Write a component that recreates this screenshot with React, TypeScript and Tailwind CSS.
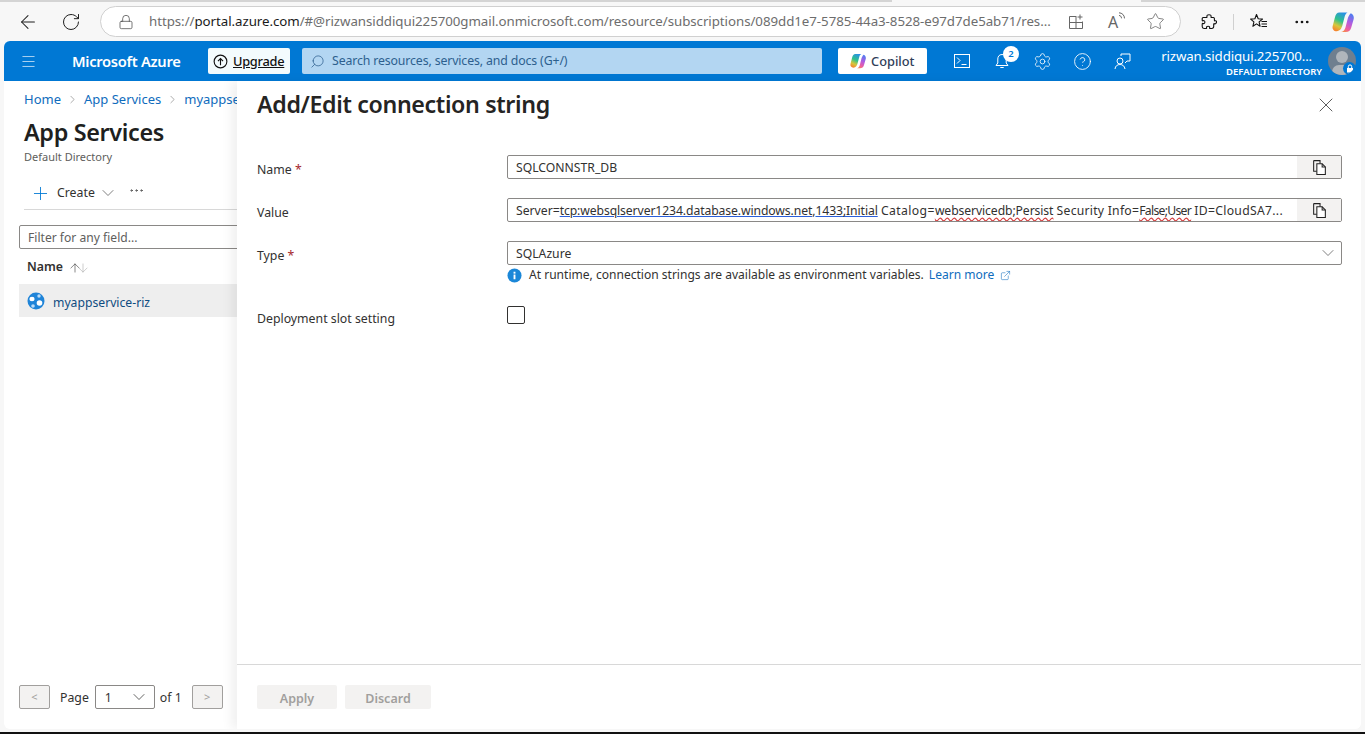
import React from "react";
import {
  ArrowLeft, RotateCw, Lock, Star, MoreHorizontal, Menu, Search, Settings, CircleHelp, Plus,
  ChevronDown, ChevronRight, X, ExternalLink, ArrowUp, ArrowDown,
} from "lucide-react";

const font = { fontFamily: '"Noto Sans", "Open Sans", sans-serif' };

function CopyGlyph() {
  return (
    <svg width="17" height="17" viewBox="0 0 16 16" fill="none" stroke="#222" strokeWidth="1">
      <path d="M2.500 1.500h6v3M2.500 1.500v10h3" />
      <path d="M5.500 4.500h5l3 3v7h-8z" fill="#fff" />
      <path d="M10.500 4.500v3h3" />
    </svg>
  );
}

function CopilotLogo({ size = 16 }: { size?: number }) {
  return (
    <svg width={size} height={size} viewBox="0 0 24 24">
      <defs>
        <linearGradient id={`cpa${size}`} x1="0.700" y1="0" x2="0.300" y2="1">
          <stop offset="0" stopColor="#2a8fe8" />
          <stop offset="0.450" stopColor="#2fc28a" />
          <stop offset="0.750" stopColor="#d8c63a" />
          <stop offset="1" stopColor="#f5852f" />
        </linearGradient>
        <linearGradient id={`cpb${size}`} x1="0.700" y1="0" x2="0.300" y2="1">
          <stop offset="0" stopColor="#4f7df0" />
          <stop offset="0.450" stopColor="#b35be0" />
          <stop offset="0.800" stopColor="#ee5fa0" />
          <stop offset="1" stopColor="#f58a50" />
        </linearGradient>
      </defs>
      <path d="M8 1.500h9c-1.500.8-2.500 2-3 4L11.500 15c-.8 3.500-2.500 7-6.500 7-3 0-5-2.500-4.300-5.500L3.300 6.500C4 3.500 5.500 1.500 8 1.500z" fill={`url(#cpa${size})`} />
      <path d="M10 23c2.500-.5 4-2.500 4.700-5L17 9c.6-2.500 1.700-5 3.500-6.500C23 3.500 24.300 6 23.600 9L21 18c-.8 3.200-3 5-6 5z" fill={`url(#cpb${size})`} />
    </svg>
  );
}

function AppServiceIcon() {
  return (
    <svg width="18" height="18" viewBox="0 0 18 18">
      <circle cx="9" cy="9" r="8.500" fill="#1f84d8" />
      <ellipse cx="5" cy="7" rx="2.600" ry="2.200" fill="#fff" />
      <circle cx="12" cy="4" r="1.700" fill="#bcdcf7" />
      <circle cx="6" cy="14" r="1.800" fill="#bcdcf7" />
      <circle cx="12.500" cy="11" r="2.800" fill="#fff" />
    </svg>
  );
}

function HeaderIcon({ children }: { children: React.ReactNode }) {
  return <div className="flex h-10 w-10 items-center justify-center text-white">{children}</div>;
}

function FormRow({ label, required, children, className, labelClass }: { label: string; required?: boolean; children: React.ReactNode; className?: string; labelClass?: string }) {
  return (
    <div className={`flex ${className ?? ""}`}>
      <div className={`w-[250px] shrink-0 text-[12.300px] leading-[18px] text-[#323130] ${labelClass ?? "pt-[6px]"}`}>
        {label}
        {required && <span className="text-[#a4262c]"> *</span>}
      </div>
      <div className="min-w-0 flex-1">{children}</div>
    </div>
  );
}

function CopyInput({ children }: { children: React.ReactNode }) {
  return (
    <div className="flex h-[24px] items-center rounded-[2px] border border-[#8a8886] bg-white">
      <div className="min-w-0 flex-1 overflow-hidden whitespace-nowrap pl-[8px] pr-[8px] pt-[3px] text-[12.200px] text-[#323130]">{children}</div>
      <div className="flex h-full w-[44px] shrink-0 items-center justify-center bg-[#f3f2f1]">
        <CopyGlyph />
      </div>
    </div>
  );
}

export default function App() {
  return (
    <div className="flex h-[734px] w-[1365px] flex-col overflow-hidden bg-[#f7f7f7]" style={font}>
      {/* Tab strip remnant */}
      <div className="flex h-[2px] shrink-0">
        <div className="w-[892px] bg-[#d4d4d4]" />
        <div className="w-[249px]" />
        <div className="flex-1 bg-[#d4d4d4]" />
      </div>
      {/* Browser toolbar */}
      <div className="flex h-[39px] shrink-0 items-center pl-[17px]">
        <ArrowLeft size={22} strokeWidth={1.100} className="text-[#1f1f1f]" />
        <RotateCw size={20} strokeWidth={1.200} className="ml-[22px] text-[#1f1f1f]" />
        <div className="ml-[19px] flex h-[31px] w-[1081px] items-center rounded-full border border-[#d0d0d0] bg-white pl-[17px]">
          <Lock size={16} strokeWidth={1.100} className="shrink-0 text-[#444]" />
          <div className="ml-[15px] w-[908px] shrink-0 whitespace-nowrap text-[13.300px] tracking-[-0.050px] text-[#6d6d6d]">
            https://<span className="text-[#1a1a1a]">portal.azure.com</span>/#@rizwansiddiqui225700gmail.onmicrosoft.com/resource/subscriptions/089dd1e7-5785-44a3-8528-e97d7de5ab71/res...
          </div>
          <div className="ml-[11px] flex items-center text-[#666]">
            <svg width="16" height="16" viewBox="0 0 16 16" fill="none" stroke="#666" strokeWidth="1">
              <path d="M8.500 2.500h-7v12h13v-7M8 3v11M1.500 8.500h13M12 .5v5M9.500 3h5" />
            </svg>
            <div className="relative ml-[24px] flex h-[16px] w-[18px] items-center">
              <span className="text-[16px] leading-none text-[#666]">A</span>
              <svg className="absolute -top-[2px] left-[10px]" width="9" height="11" viewBox="0 0 9 11" fill="none" stroke="#666" strokeWidth="1">
                <path d="M1 3.500c1.400 0 2.500 1 2.500 2.800M1 .8c3 0 5.500 2.400 5.500 5.600" />
              </svg>
            </div>
            <Star size={19} strokeWidth={1} className="ml-[20px]" />
          </div>
        </div>
        <svg width="16" height="16" viewBox="0 0 16 16" fill="none" stroke="#111" strokeWidth="1.100" strokeLinejoin="round" className="ml-[20px]">
          <path d="M6 2.800C5.500 1.300 6.800.7 8 .7s2.500.6 2 2.100c-.1.500.2.700.6.700h1.800c.6 0 1 .4 1 1v1.700c0 .5.300.8.800.6 1.200-.4 1.600.9 1.100 2-.4 1-1.200 1.300-1.900.9-.4-.2-.7 0-.7.500v2.400c0 1-1 1.900-2 1.900H9.200c-.5 0-.8-.3-.6-.8.400-1-.4-1.500-1.500-1.500s-1.900.5-1.500 1.500c.2.500-.1.800-.6.800H3c-1 0-1.800-.9-1.800-1.900V10c0-.5.300-.7.800-.5 1 .5 1.900-.3 1.900-1.400S3 6.300 2 6.800c-.5.200-.8 0-.8-.5v-1.800c0-.6.400-1 1-1h3.200c.4 0 .7-.2.600-.7z" />
        </svg>
        <div className="ml-[16px] h-[16px] w-px bg-[#d0d0d0]" />
        <svg width="18" height="17" viewBox="0 0 18 17" fill="none" stroke="#111" strokeWidth="1.100" strokeLinejoin="round" className="ml-[16px]">
          <path d="M6.500 1.500 8.200 5.800l4.300.3-3.400 2.800 1 4.400-3.600-2.400-3.600 2.400 1-4.400L.6 6.100l4.300-.3z" />
          <path d="M11.500 8.500h5.500M11.500 11h5.500M11.500 13.500h5.500" />
        </svg>
        <MoreHorizontal size={18} strokeWidth={1.600} className="ml-[25px] text-[#111]" />
        <div className="ml-[21px]"><CopilotLogo size={22} /></div>
      </div>

      {/* Portal window */}
      <div className="mx-[4px] flex h-[688px] shrink-0 flex-col overflow-hidden rounded-[6px] bg-white">
        {/* Azure header */}
        <div className="flex h-[40px] shrink-0 items-center bg-[#0078d4] text-white">
          <Menu size={17} strokeWidth={1.300} className="ml-[16px] text-[#b8d9f3]" />
          <div className="ml-[35px] w-[136px] pt-px text-[14.700px] font-semibold tracking-[-0.020em]">Microsoft Azure</div>
          <div className="flex h-[26px] w-[82px] items-center rounded-[2px] bg-[#f3fbfd] pl-[5px] text-[#111]">
            <svg width="15" height="15" viewBox="0 0 16 16" fill="none" stroke="#111" strokeWidth="1.200">
              <circle cx="8" cy="8" r="6.800" />
              <path d="M8 12V5M5.300 7.500 8 4.800l2.700 2.700" />
            </svg>
            <span className="ml-[5px] pt-px text-[12.800px] font-medium tracking-[-0.020em] underline">Upgrade</span>
          </div>
          <div className="ml-[12px] flex h-[26px] w-[520px] items-center rounded-[2px] bg-[#b3d6f2] pl-[8px] text-[#2d5f8e]">
            <Search size={15} strokeWidth={1.200} className="-scale-x-100" />
            <span className="ml-[7px] pt-px text-[12.300px] tracking-[-0.010em]">Search resources, services, and docs (G+/)</span>
          </div>
          <div className="ml-[16px] flex h-[26px] w-[89px] items-center rounded-[2px] bg-white pl-[12px] text-[#2f3e58]">
            <CopilotLogo size={16} />
            <span className="ml-[5px] pt-px text-[12.800px] font-medium">Copilot</span>
          </div>
          <div className="ml-[15px] flex shrink-0 items-center">
            <HeaderIcon>
              <svg width="16" height="14" viewBox="0 0 16 14" fill="none" stroke="#fff" strokeWidth="1">
                <rect x=".5" y=".5" width="15" height="13" />
                <path d="m3 3.500 3 3-3 3M7.500 10.500h5" />
              </svg>
            </HeaderIcon>
            <div className="relative flex h-10 w-10 items-center justify-center">
              <svg width="14" height="16" viewBox="0 0 14 16" fill="none" stroke="#fff" strokeWidth="1">
                <path d="M7 1.500c-3 0-4.200 2.200-4.200 4.500v4L1 12.500h12L11.200 10V6C11.200 3.700 10 1.500 7 1.500ZM5.300 14.500h3.400" />
              </svg>
              <div className="absolute right-[3px] top-[5px] flex h-[16px] w-[16px] items-center justify-center rounded-full bg-white text-[9.500px] font-semibold text-[#0078d4]">2</div>
            </div>
            <HeaderIcon><Settings size={19} strokeWidth={1} /></HeaderIcon>
            <HeaderIcon><CircleHelp size={19} strokeWidth={1.100} /></HeaderIcon>
            <HeaderIcon>
              <svg width="17" height="17" viewBox="0 0 17 17" fill="none" stroke="#fff" strokeWidth="1">
                <circle cx="6" cy="8" r="3" />
                <path d="M1 16c.3-3 2.300-4.500 5-4.500s4.500 1.500 5 4.500M7 3V1h9v7h-3l-2 2" />
              </svg>
            </HeaderIcon>
          </div>
          <div className="ml-[7px] flex w-[173px] shrink-0 flex-col items-end pt-[5px] text-right">
            <div className="mr-[10px] whitespace-nowrap text-[13.300px] leading-[15px] tracking-[-0.010em]">rizwan.siddiqui.225700...</div>
            <div className="whitespace-nowrap text-[9.500px] font-semibold leading-[15px]">DEFAULT DIRECTORY</div>
          </div>
          <div className="relative ml-[6px] h-[28px] w-[28px] shrink-0 overflow-hidden rounded-full bg-[#6f7f8f]">
            <div className="absolute left-[8px] top-[4px] h-[12px] w-[12px] rounded-full bg-[#b0b6bc]" />
            <div className="absolute left-[4px] top-[18px] h-[14px] w-[20px] rounded-full bg-[#b0b6bc]" />
            <div className="absolute bottom-0 right-0 flex h-[13px] w-[13px] items-center justify-center rounded-full bg-[#0078d4]">
              <svg width="8" height="9" viewBox="0 0 8 9">
                <path d="M1 4h6v4.500H1z" fill="#fff" />
                <path d="M2.300 4V2.600a1.700 1.700 0 0 1 3.400 0V4" fill="none" stroke="#fff" strokeWidth="1" />
              </svg>
            </div>
          </div>
        </div>

        {/* Body */}
        <div className="flex min-h-0 flex-1">
          {/* Left list */}
          <div className="flex w-[233px] shrink-0 flex-col overflow-hidden pl-[15px]">
            <div className="mt-[9px] flex items-center whitespace-nowrap pl-[5px] text-[13px] leading-[18px] text-[#0f6cbd]">
              <span className="shrink-0">Home</span>
              <ChevronRight size={13} strokeWidth={1} className="mx-[5px] shrink-0 text-[#666]" />
              <span className="shrink-0">App Services</span>
              <ChevronRight size={13} strokeWidth={1} className="mx-[5px] shrink-0 text-[#666]" />
              <span>myappse</span>
            </div>
            <div className="mb-[3px] mt-[10px] pl-[5px] text-[23.400px] font-semibold leading-[28px] tracking-[-0.015em] text-[#201f1e]">App Services</div>
            <div className="pl-[5px] text-[11px] leading-[16px] text-[#605e5c]">Default Directory</div>
            <div className="ml-[5px] flex h-[45px] items-center border-b border-[#d8d8d8] pl-[6px] pt-[12px] text-[12.300px] text-[#323130]">
              <Plus size={21} strokeWidth={1} className="text-[#0078d4]" />
              <span className="ml-[6px]">Create</span>
              <ChevronDown size={20} strokeWidth={0.900} className="ml-[3px] text-[#555]" />
              <MoreHorizontal size={17} strokeWidth={1.200} className="ml-[10px] -translate-y-[3px] text-[#444]" />
            </div>
            <div className="mt-[15px] flex h-[24px] w-[240px] shrink-0 items-center rounded-[2px] border border-[#8a8886] pl-[8px] pt-[3px] text-[12.100px] text-[#605e5c]">
              Filter for any field...
            </div>
            <div className="flex h-[35px] shrink-0 items-center pl-[8px] pt-[2px] text-[12.300px] font-semibold text-[#323130]">
              Name
              <ArrowUp size={14} strokeWidth={1} className="ml-[5px] text-[#333]" />
              <ArrowDown size={14} strokeWidth={1} className="-ml-[6px] text-[#aaa]" />
            </div>
            <div className="flex h-[33px] w-[240px] shrink-0 items-center bg-[#eeeeee] pl-[8px] text-[12.200px] text-[#0f4c81]">
              <AppServiceIcon />
              <span className="ml-[8px] pt-[5px]">myappservice-riz</span>
            </div>
            <div className="flex-1" />
            <div className="mb-[20px] flex items-center text-[12.300px] text-[#323130]">
              <div className="flex h-[24px] w-[31px] items-center justify-center rounded-[2px] border border-[#a19f9d] bg-[#f3f2f1] text-[11px] text-[#a19f9d]">&lt;</div>
              <span className="ml-[10px] pt-[3px]">Page</span>
              <div className="ml-[6px] flex h-[24px] w-[60px] items-center justify-between rounded-[2px] border border-[#8a8886] bg-white pl-[9px] pr-[5px]">
                <span className="pt-[3px]">1</span>
                <ChevronDown size={20} strokeWidth={0.900} />
              </div>
              <span className="ml-[5px] pt-[3px]">of 1</span>
              <div className="ml-[10px] flex h-[24px] w-[31px] items-center justify-center rounded-[2px] border border-[#a19f9d] bg-[#f3f2f1] text-[11px] text-[#a19f9d]">&gt;</div>
            </div>
          </div>

          {/* Right blade */}
          <div className="z-10 flex min-w-0 flex-1 flex-col bg-white shadow-[-6px_0_10px_rgba(0,0,0,0.060)]">
            <div className="flex h-[51px] shrink-0 items-start justify-between pl-[20px] pr-[23px] pt-[6px]">
              <div className="text-[23.200px] font-semibold leading-[34px] tracking-[-0.015em] text-[#252423]">Add/Edit connection string</div>
              <X size={24} strokeWidth={0.800} className="mt-[6px] text-[#333]" />
            </div>
            <div className="flex-1 pl-[20px] pr-[19px] pt-[23px]">
              <FormRow label="Name" required className="mb-[19px]">
                <CopyInput>SQLCONNSTR_DB</CopyInput>
              </FormRow>
              <FormRow label="Value" className="mb-[19px]">
                <CopyInput>
                  Server=<span className="tracking-[-0.100px] underline decoration-[#2b5fd9] underline-offset-1">tcp:websqlserver1234.database.windows.net</span><span className="tracking-[-0.100px]">,</span><span className="tracking-[-0.100px] underline decoration-[#2b5fd9] underline-offset-1">1433;Initial</span> <span className="tracking-[0.400px]">Catalog=</span><span className="tracking-[-0.100px] underline decoration-[#d23b3b] decoration-wavy underline-offset-1">webservicedb;Persist</span> <span className="tracking-[0.250px]">Security Info=</span><span className="tracking-[-0.700px] underline decoration-[#d23b3b] decoration-wavy underline-offset-1">False;User</span> <span className="tracking-[0.300px]">ID=CloudSA7...</span>
                </CopyInput>
              </FormRow>
              <FormRow label="Type" required className="mb-[23px]">
                <div className="flex h-[24px] items-center justify-between rounded-[2px] border border-[#8a8886] bg-white pl-[8px] pr-[3px] text-[12.200px] text-[#323130]">
                  <span className="pt-[3px]">SQLAzure</span>
                  <ChevronDown size={20} strokeWidth={0.900} className="text-[#555]" />
                </div>
                <div className="mt-[2px] flex h-[16px] items-center text-[12.050px] text-[#323130]">
                  <svg width="15" height="15" viewBox="0 0 16 16">
                    <circle cx="8" cy="8" r="7.500" fill="#1b87d8" />
                    <rect x="7" y="7" width="2" height="5" fill="#fff" />
                    <rect x="7" y="4" width="2" height="2" fill="#fff" />
                  </svg>
                  <span className="ml-[7px]">At runtime, connection strings are available as environment variables.</span>
                  <span className="ml-[5px] text-[#0f6cbd]">Learn more</span>
                  <ExternalLink size={11} strokeWidth={1.200} className="ml-[6px] text-[#0f6cbd]" />
                </div>
              </FormRow>
              <FormRow label="Deployment slot setting" labelClass="pt-[4px]">
                <div className="h-[18px] w-[18px] rounded-[2px] border border-[#323130] bg-white" />
              </FormRow>
            </div>
            <div className="flex h-[65px] shrink-0 items-start gap-[8px] border-t border-[#d8d8d8] pl-[20px] pt-[20px] text-[12.500px] font-semibold text-[#a19f9d]">
              <div className="flex h-[24px] w-[80px] items-center justify-center rounded-[2px] bg-[#f3f2f1] pt-[5px]">Apply</div>
              <div className="flex h-[24px] w-[86px] items-center justify-center rounded-[2px] bg-[#f3f2f1] pt-[5px]">Discard</div>
            </div>
          </div>
        </div>
      </div>
      <div className="mt-[3px] h-[2px] bg-[#111]" />
    </div>
  );
}
